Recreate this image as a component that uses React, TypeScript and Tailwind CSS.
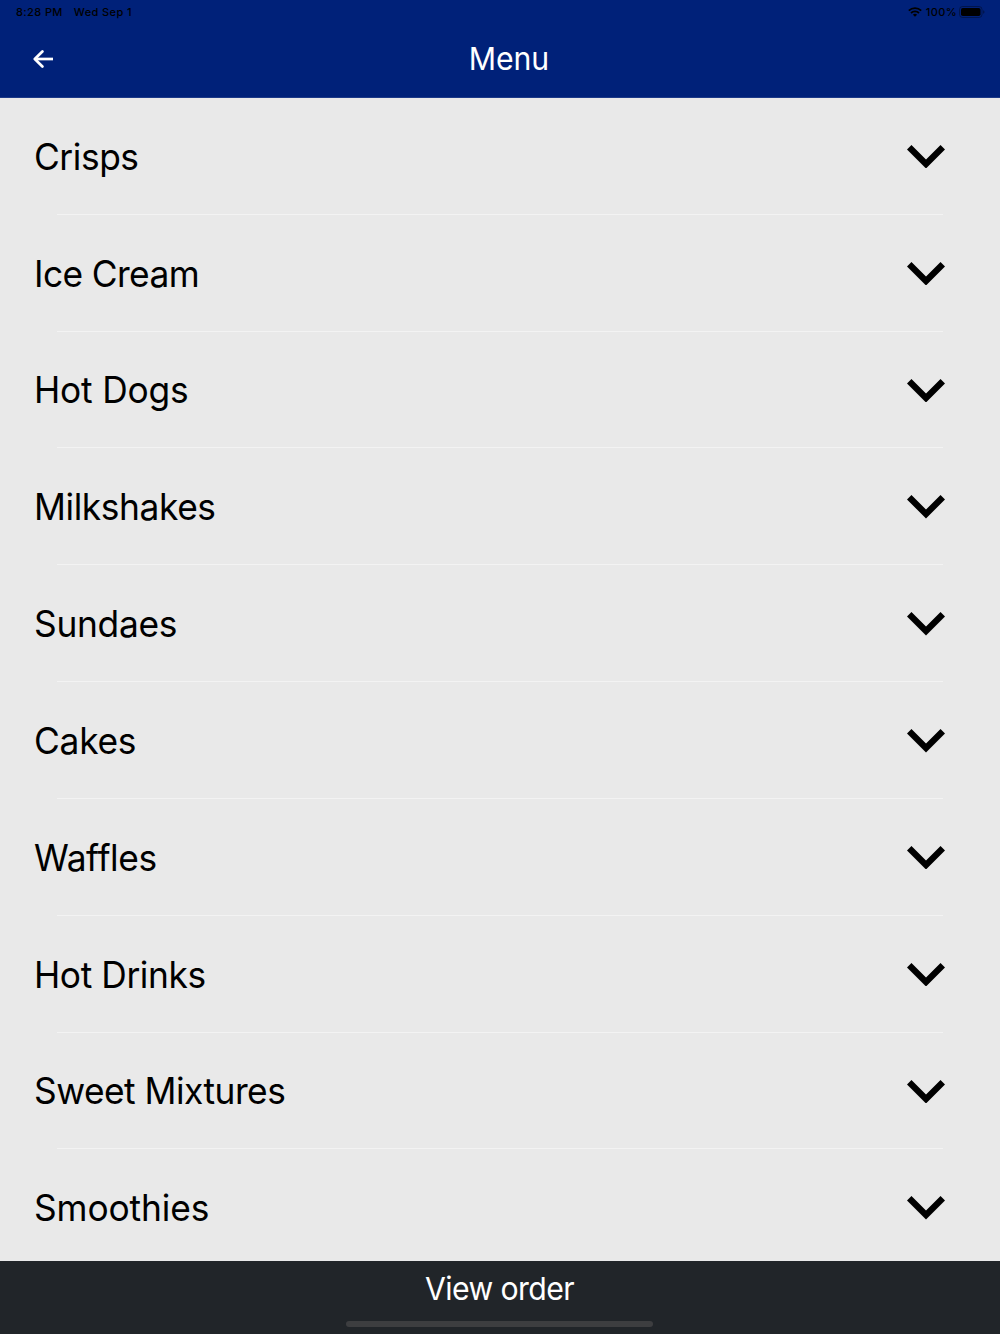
type Category = {
  name: string
  tracking: string
}

const categories: Category[] = [
  { name: 'Crisps', tracking: 'tracking-[-0.45px]' },
  { name: 'Ice Cream', tracking: 'tracking-[-0.63px]' },
  { name: 'Hot Dogs', tracking: 'tracking-[-0.2px]' },
  { name: 'Milkshakes', tracking: 'tracking-[-0.42px]' },
  { name: 'Sundaes', tracking: 'tracking-[-0.3px]' },
  { name: 'Cakes', tracking: 'tracking-[-0.25px]' },
  { name: 'Waffles', tracking: 'tracking-[-0.4px]' },
  { name: 'Hot Drinks', tracking: 'tracking-[-0.42px]' },
  { name: 'Sweet Mixtures', tracking: 'tracking-[-0.53px]' },
  { name: 'Smoothies', tracking: 'tracking-[-0.12px]' },
]

function StatusBar() {
  return (
    <div className="flex h-6 items-center justify-between pl-4 pr-[15px] text-[11px] font-medium leading-none text-black">
      <div className="flex gap-[11px] pt-px">
        <span className="tracking-[0.4px]">8:28 PM</span>
        <span className="tracking-[0.4px]">Wed Sep 1</span>
      </div>
      <div className="flex items-center">
        <svg className="mr-1 h-[10px] w-[14px]" viewBox="0 0 14 10" fill="none" stroke="currentColor" strokeWidth="1.8">
          <path d="M0.8 3.6a9 9 0 0 1 12.4 0" />
          <path d="M3 6a5.8 5.8 0 0 1 8 0" />
          <path d="M7 9.8L4.9 7.7a3 3 0 0 1 4.2 0z" fill="currentColor" stroke="none" />
        </svg>
        <span className="pt-px tracking-[0.4px]">100%</span>
        <svg className="ml-[2px] h-3 w-[26px]" viewBox="0 0 26 12">
          <rect x="0.5" y="0.5" width="22.5" height="11" rx="3" fill="none" stroke="#000" strokeOpacity="0.35" />
          <rect x="2" y="2" width="19.5" height="8" rx="1.8" />
          <path d="M24.3 4.2v3.6c.7-.3 1.1-1 1.1-1.8s-.4-1.5-1.1-1.8z" fillOpacity="0.5" />
        </svg>
      </div>
    </div>
  )
}

function Header() {
  return (
    <header className="h-[98px] shrink-0 border-b border-[#1d3a88] bg-[#002179]">
      <StatusBar />
      <div className="grid h-[70px] grid-cols-[1fr_auto_1fr] items-center pl-[33px] pr-4">
        <button aria-label="Back" className="w-5 text-white">
          <svg className="h-[18px] w-5" viewBox="0 0 20 18" fill="none" stroke="currentColor" strokeWidth="2.7">
            <path d="M2 9h18" />
            <path d="M9.4 1.5L1.8 9l7.6 7.5" strokeLinecap="round" strokeLinejoin="round" />
          </svg>
        </button>
        <h1 className="scale-x-[0.96] text-[31.5px] tracking-[-0.1px] text-white">Menu</h1>
      </div>
    </header>
  )
}

function CategoryRow({ name, tracking }: Category) {
  return (
    <li className="flex h-[116.83px] shrink-0 flex-col">
      <button className="flex flex-1 items-center justify-between pl-[34px] pr-[55px] pt-[1.6px] text-left">
        <span className={`origin-left scale-x-[0.96] pt-[1px] text-[36.8px] leading-none ${tracking}`}>{name}</span>
        <svg className="h-[23.5px] w-[38px]" viewBox="6 8.59 12 7.41" preserveAspectRatio="none">
          <path d="M7.41 8.59L12 13.17l4.59-4.58L18 10l-6 6-6-6z" />
        </svg>
      </button>
      <div className="ml-[57px] mr-[57px] h-px bg-[#f3f3f3]" />
    </li>
  )
}

export default function App() {
  return (
    <div className="flex h-[1334px] w-[1000px] flex-col overflow-hidden bg-[#e9e9e9] font-['Inter',sans-serif] text-black">
      <Header />
      <ul className="flex min-h-0 flex-1 flex-col overflow-hidden">
        {categories.map((category) => (
          <CategoryRow key={category.name} {...category} />
        ))}
      </ul>
      <footer className="flex h-[73.4px] shrink-0 flex-col items-center justify-between bg-[#212529] pb-[7.5px] pt-[4px]">
        <button className="mr-px scale-x-[0.96] text-[31.5px] tracking-[-0.65px] text-white">View order</button>
        <div className="mr-px h-[6px] w-[307px] rounded-full bg-[#3d3e40]" />
      </footer>
    </div>
  )
}
